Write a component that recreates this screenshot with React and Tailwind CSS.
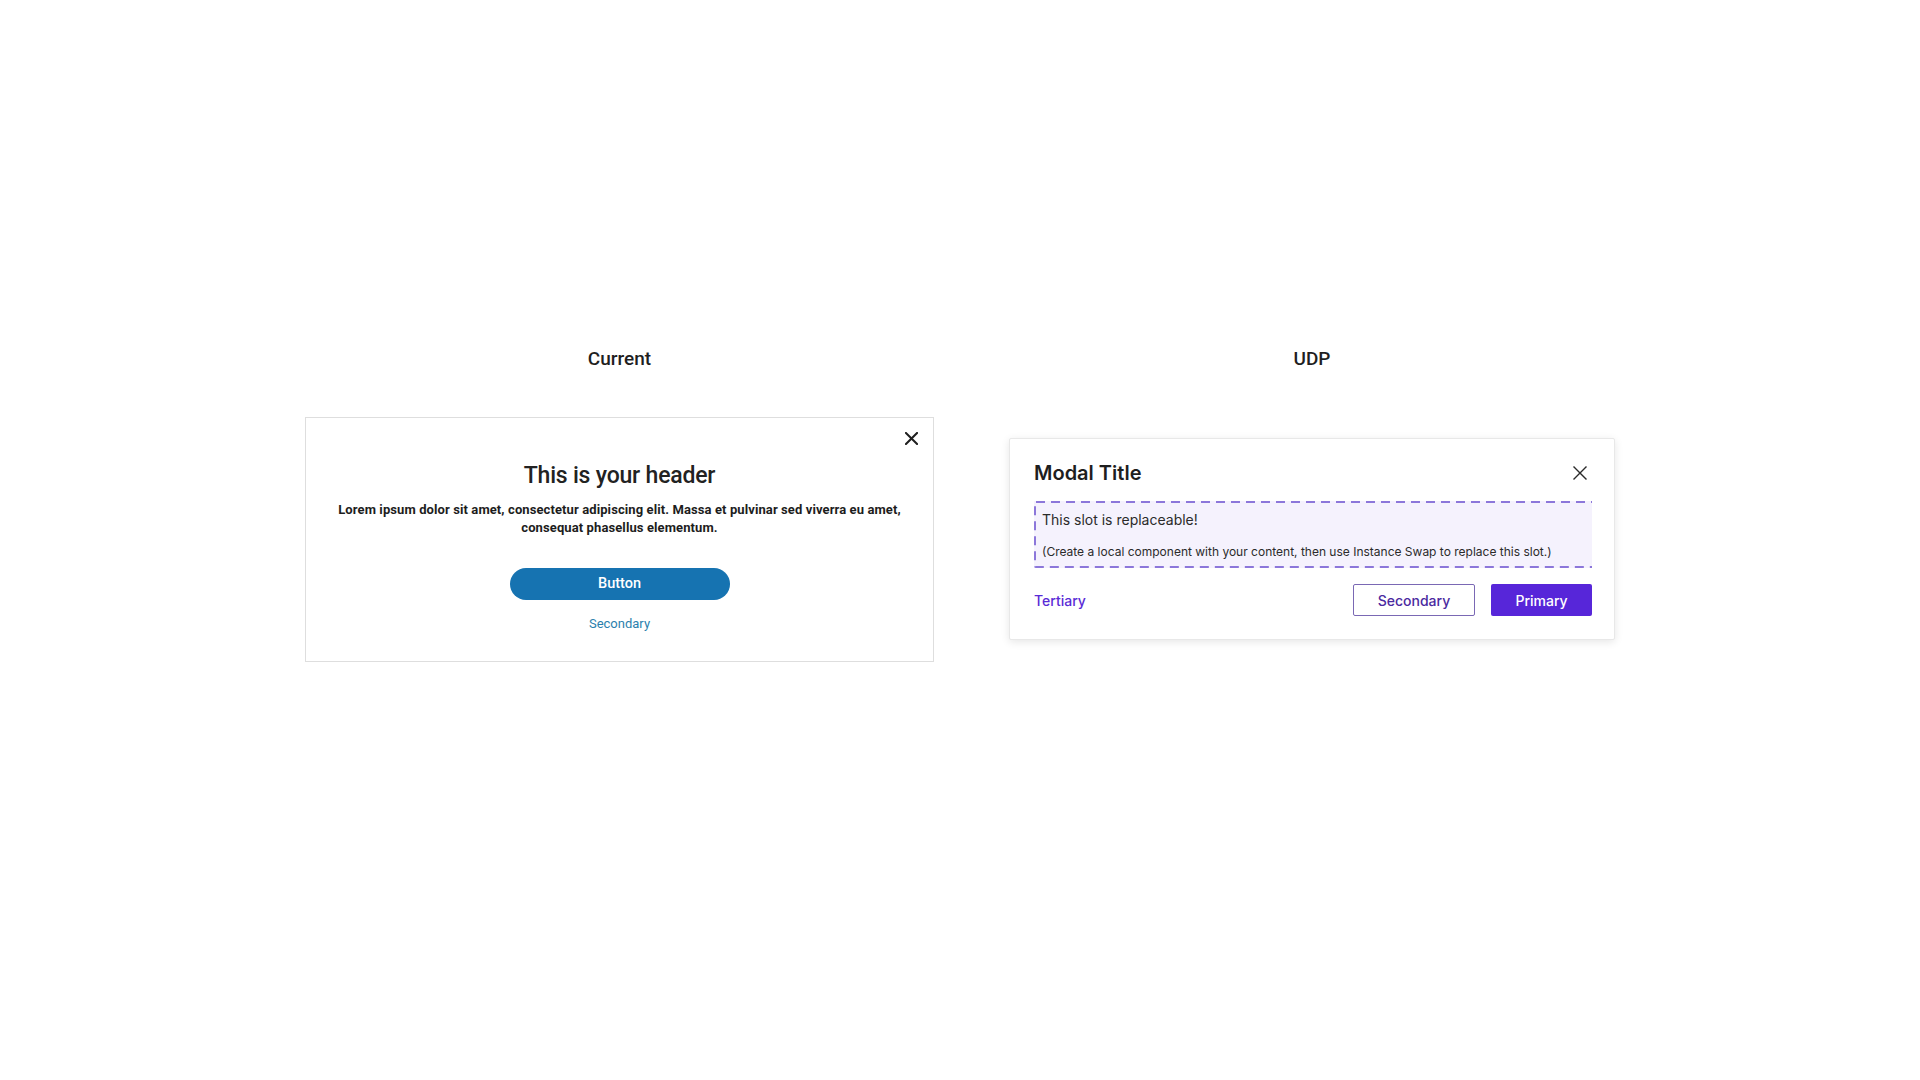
import React from "react";

// Side-by-side comparison of the old modal and the UDP modal
const CloseIcon = ({ className = "", strokeWidth = 2 }) => (
  <svg className={className} viewBox="0 0 14 14" fill="none" stroke="currentColor" strokeWidth={strokeWidth} strokeLinecap="square">
    <path d="M1 1l12 12M13 1L1 13" />
  </svg>
);

function CurrentModal() {
  return (
    <div className="relative w-[629px] h-[245px] border border-[#dedede] bg-white px-[28px] pt-[42px] flex flex-col items-center font-['Roboto',sans-serif]">
      <button className="absolute right-[14px] top-[14px] w-[14px] h-[14px] text-[#1f1f1f]">
        <CloseIcon className="w-[13px] h-[13px]" strokeWidth={2.2} />
      </button>
      <h2 className="text-[23px] leading-[32px] font-medium text-[#222] tracking-[-0.2px]">This is your header</h2>
      <p className="mt-[9px] text-[13px] leading-[18px] font-bold text-[#1d1d1d] text-center tracking-[0.1px] whitespace-nowrap">
        Lorem ipsum dolor sit amet, consectetur adipiscing elit. Massa et pulvinar sed viverra eu amet,
        <br />
        consequat phasellus elementum.
      </p>
      <button className="mt-[31px] w-[220px] h-[32px] rounded-full bg-[#1673b1] text-white text-[14.5px] font-medium">
        Button
      </button>
      <a className="mt-[15px] text-[13px] leading-[18px] text-[#2b7fad]">Secondary</a>
    </div>
  );
}

function UdpModal() {
  return (
    <div className="w-[606px] h-[202px] border border-[#e8e8e8] bg-white rounded-[2px] shadow-[0_2px_8px_rgba(0,0,0,0.10)] pl-6 pr-[22px] pt-[20px] font-['Inter',sans-serif]">
      <div className="flex items-center justify-between h-[28px]">
        <h2 className="text-[20px] leading-[28px] font-semibold text-[#1e1e1e]">Modal Title</h2>
        <button className="w-[14px] h-[14px] mr-[5px] text-[#2a2a2a]">
          <CloseIcon className="w-[14px] h-[14px]" strokeWidth={1.4} />
        </button>
      </div>
      <div className="relative mt-[14px] h-[67px] bg-[#f5f2fd] px-[8px] pt-[9px]">
        <svg className="absolute inset-0 w-full h-full" preserveAspectRatio="none">
          <rect x="1" y="1" width="558" height="65" fill="none" stroke="#8c77da" strokeWidth="2" strokeDasharray="9 6" rx="1" />
        </svg>
        <p className="relative text-[14px] leading-[20px] text-[#2b2b2b]">This slot is replaceable!</p>
        <p className="relative mt-[14px] text-[12px] leading-[16px] text-[#2b2b2b]">
          (Create a local component with your content, then use Instance Swap to replace this slot.)
        </p>
      </div>
      <div className="mt-[16px] flex items-center justify-between">
        <a className="text-[14px] font-medium text-[#5a2bd6]">Tertiary</a>
        <div className="flex gap-4">
          <button className="w-[122px] h-[32px] rounded-[2px] border border-[#7a68b4] bg-white text-[14px] font-medium text-[#4b2aa0]">
            Secondary
          </button>
          <button className="w-[101px] h-[32px] rounded-[2px] bg-[#5726d9] text-[14px] font-medium text-white">
            Primary
          </button>
        </div>
      </div>
    </div>
  );
}

export default function App() {
  return (
    <div className="min-h-screen w-full bg-white pt-[347px]">
      <div className="flex justify-center gap-[75px]">
        <div className="flex flex-col items-center">
          <h3 className="h-[24px] leading-[24px] text-[19px] font-medium text-[#1f1f1f] font-['Roboto',sans-serif]">Current</h3>
          <div className="h-[336px] flex items-center">
            <CurrentModal />
          </div>
        </div>
        <div className="flex flex-col items-center">
          <h3 className="h-[24px] leading-[24px] text-[19px] font-medium text-[#1f1f1f] font-['Roboto',sans-serif]">UDP</h3>
          <div className="h-[336px] flex items-center">
            <UdpModal />
          </div>
        </div>
      </div>
    </div>
  );
}
